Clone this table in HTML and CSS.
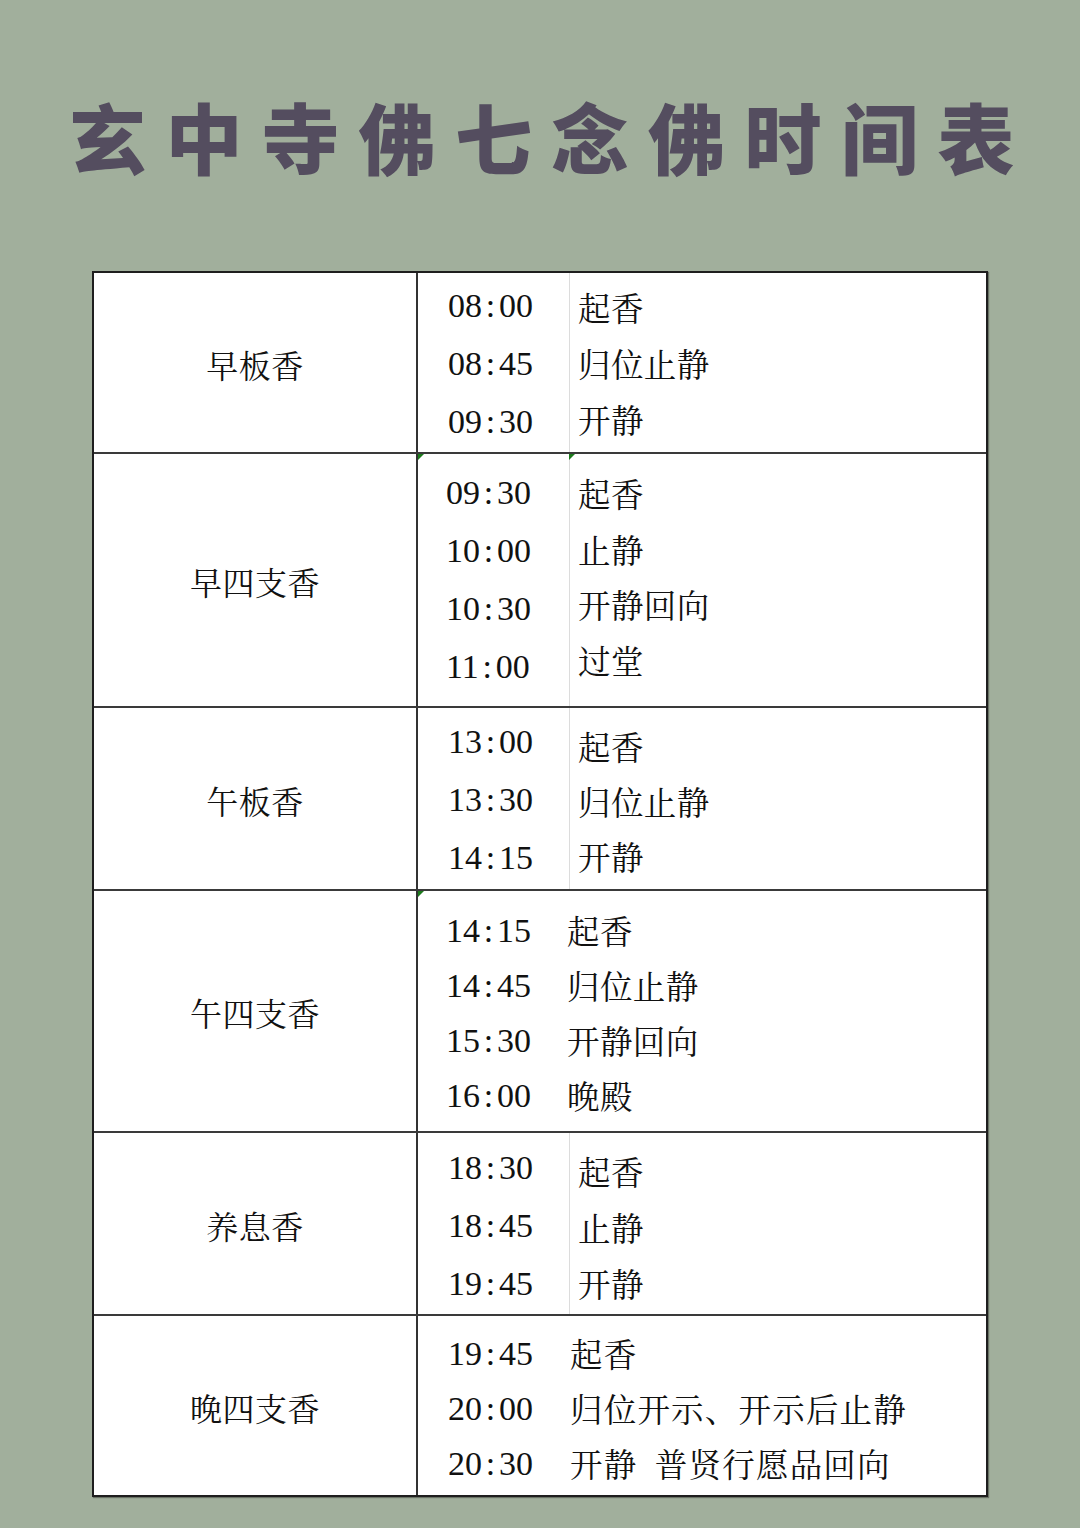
FILE: index.html
```html
<!DOCTYPE html>
<html lang="zh-CN">
<head>
<meta charset="utf-8">
<title>玄中寺佛七念佛时间表</title>
<link rel="stylesheet" href="styles.css">
</head>
<body>
<div class="page">
  <h1 class="title">玄中寺佛七念佛时间表</h1>
  <div class="table">
    <div class="row r1">
      <div class="label">早板香</div>
      <div class="sched split">
        <div class="times"><div>08<span class="c">:</span>00</div><div>08<span class="c">:</span>45</div><div>09<span class="c">:</span>30</div></div>
        <div class="descs"><div>起香</div><div>归位止静</div><div>开静</div></div>
      </div>
    </div>
    <div class="row r2">
      <div class="label">早四支香</div>
      <div class="sched split mark2">
        <div class="times t-left"><div>09<span class="c">:</span>30</div><div>10<span class="c">:</span>00</div><div>10<span class="c">:</span>30</div><div>11<span class="c">:</span>00</div></div>
        <div class="descs"><div>起香</div><div>止静</div><div>开静回向</div><div>过堂</div></div>
      </div>
    </div>
    <div class="row r3">
      <div class="label">午板香</div>
      <div class="sched split">
        <div class="times"><div>13<span class="c">:</span>00</div><div>13<span class="c">:</span>30</div><div>14<span class="c">:</span>15</div></div>
        <div class="descs"><div>起香</div><div>归位止静</div><div>开静</div></div>
      </div>
    </div>
    <div class="row r4">
      <div class="label">午四支香</div>
      <div class="sched open mark1">
        <div class="times t-left"><div>14<span class="c">:</span>15</div><div>14<span class="c">:</span>45</div><div>15<span class="c">:</span>30</div><div>16<span class="c">:</span>00</div></div>
        <div class="descs"><div>起香</div><div>归位止静</div><div>开静回向</div><div>晚殿</div></div>
      </div>
    </div>
    <div class="row r5">
      <div class="label">养息香</div>
      <div class="sched split">
        <div class="times"><div>18<span class="c">:</span>30</div><div>18<span class="c">:</span>45</div><div>19<span class="c">:</span>45</div></div>
        <div class="descs"><div>起香</div><div>止静</div><div>开静</div></div>
      </div>
    </div>
    <div class="row r6">
      <div class="label">晚四支香</div>
      <div class="sched open wide">
        <div class="times"><div>19<span class="c">:</span>45</div><div>20<span class="c">:</span>00</div><div>20<span class="c">:</span>30</div></div>
        <div class="descs"><div>起香</div><div>归位开示、开示后止静</div><div>开静&#8194;普贤行愿品回向</div></div>
      </div>
    </div>
  </div>
</div>
</body>
</html>
```

FILE: styles.css
```css
html, body {
  margin: 0;
  padding: 0;
  background: #a1af9c;
}

.page {
  width: 1080px;
  height: 1528px;
  padding-top: 98px;
  box-sizing: border-box;
}

.title {
  margin: 0 0 97px 0;
  padding-left: 69px;
  height: 76px;
  font-family: "Noto Sans CJK SC", sans-serif;
  font-weight: 900;
  font-size: 77px;
  line-height: 76px;
  letter-spacing: 19.5px;
  color: #544d5f;
  white-space: nowrap;
}

.table {
  margin-left: 92px;
  width: 896px;
  box-sizing: border-box;
  border: 2px solid #1e1e1e;
  box-shadow: 1px 1px 1px rgba(0, 0, 0, 0.35);
  background: #fff;
  display: grid;
  grid-template-rows: 179px 254px 183px 242px 183px 181px;
  font-family: "Noto Serif CJK SC", "Noto Sans CJK SC", serif;
  color: #111;
}

.row {
  display: grid;
  grid-template-columns: 324px 1fr;
  box-sizing: border-box;
}

.row + .row {
  border-top: 2px solid #3a3a3a;
}

.label {
  border-right: 2px solid #333;
  display: flex;
  align-items: center;
  justify-content: center;
  font-size: 32px;
  letter-spacing: 0.5px;
  padding-top: 2px;
}

.sched {
  position: relative;
  display: grid;
  grid-template-columns: 151px 1fr;
}

.times {
  display: flex;
  flex-direction: column;
  justify-content: center;
  padding-left: 30px;
  font-family: "Liberation Serif", "Times New Roman", serif;
  font-size: 34px;
  line-height: 58px;
  box-sizing: border-box;
}

.times.t-left {
  padding-left: 28px;
}

.c {
  display: inline-block;
  width: 17px;
  text-align: center;
}

.descs {
  display: flex;
  flex-direction: column;
  justify-content: center;
  padding-left: 8px;
  font-size: 32.5px;
  letter-spacing: 0.4px;
  line-height: 58px;
  box-sizing: border-box;
}

.split .descs {
  border-left: 1px solid #dcdcdc;
}

.open .times,
.open .descs {
  line-height: 55px;
}

.r1 .times,
.r3 .times {
  padding-top: 2px;
}

.r1 .descs {
  line-height: 56px;
}

.r2 .descs {
  line-height: 55.5px;
  padding-bottom: 6px;
}

.r3 .descs {
  line-height: 55px;
  padding-top: 6px;
}

.r5 .times {
  padding-top: 4px;
}

.r5 .descs {
  line-height: 56px;
  padding-top: 6px;
}

.r4 .sched {
  grid-template-columns: 149px 1fr;
}

.r4 .times,
.r4 .descs {
  padding-top: 4px;
}

.r4 .descs {
  padding-left: 0;
}

.r6 .sched {
  grid-template-columns: 152px 1fr;
}

.r6 .times,
.r6 .descs {
  padding-top: 6px;
}

.r6 .descs {
  padding-left: 0;
  letter-spacing: 1.2px;
}

.mark1::before,
.mark2::before,
.mark2::after {
  content: "";
  position: absolute;
  top: 0;
  width: 0;
  height: 0;
  border-top: 6px solid #1d7a1d;
  border-right: 6px solid transparent;
}

.mark1::before,
.mark2::before {
  left: 0;
}

.mark2::after {
  left: 151px;
}
```
